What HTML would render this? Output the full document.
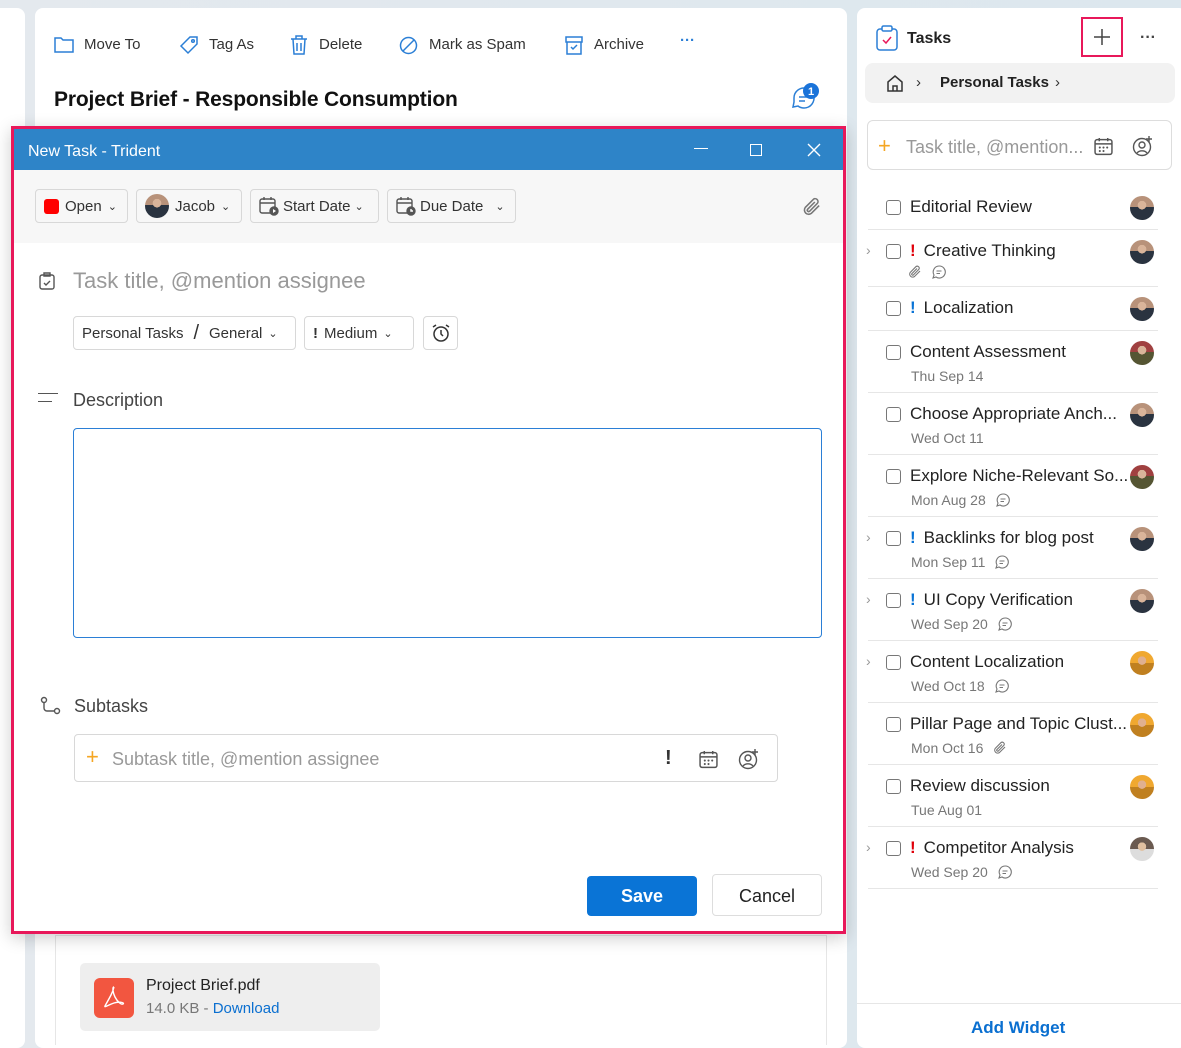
<!DOCTYPE html><html><head><style>
*{box-sizing:border-box;margin:0;padding:0}
body{width:1181px;height:1045px;overflow:hidden;background:linear-gradient(90deg,#e4e9ee,#dce7ee);font-family:"Liberation Sans",sans-serif;color:#222;position:relative}
.abs{position:absolute}
.p{background:#fff;border-radius:8px}
.tb span{position:absolute;top:36px;font-size:15px;color:#333}
.btn{position:absolute;top:189px;height:34px;border:1px solid #d8d8d8;border-radius:4px;background:#f7f7f7;font-size:15px;color:#333;display:flex;align-items:center;padding:0 8px;gap:6px}
.av{width:24px;height:24px;border-radius:50%;background:radial-gradient(circle at 50% 38%,#d9b49a 0 22%,transparent 23%),linear-gradient(#b8927a 0 45%,#2a3340 45%);display:inline-block}
.row{position:absolute;left:868px;width:290px;border-bottom:1px solid #e6e6e6}
.row .cb{position:absolute;left:18px;width:15px;height:15px;border:1.5px solid #777;border-radius:3px}
.row .t{position:absolute;left:42px;font-size:17px;color:#222;white-space:nowrap}
.row .d{position:absolute;left:43px;font-size:14px;color:#777;display:flex;align-items:center;gap:10px}
.row .av{position:absolute;left:262px}
.ex{color:#e0000a;font-weight:bold;margin-right:8px}
.exb{color:#0a74d6;font-weight:bold;margin-right:8px}
.ch{position:absolute;left:-2px;color:#999;font-size:14px}
</style></head><body>
<svg width="0" height="0" style="position:absolute"><defs>
<symbol id="cm" viewBox="0 0 14 14"><path d="M7 1a6 6 0 1 1-3 11l-3 1 1-3A6 6 0 0 1 7 1zM4.5 6h5M4.5 8.5h3.5" fill="none" stroke="#777" stroke-width="1.1"/></symbol>
<symbol id="clip" viewBox="0 0 14 14"><path d="M12 6L6.5 11.5a3 3 0 0 1-4.2-4.2L8 1.6a2 2 0 0 1 2.8 2.8L5.3 10a1 1 0 0 1-1.4-1.4L9 3.5" fill="none" stroke="#777" stroke-width="1.1"/></symbol>
<symbol id="cal" viewBox="0 0 18 18"><rect x="1" y="2.5" width="16" height="14" rx="2" fill="none" stroke="#555" stroke-width="1.4"/><path d="M1 6.5h16M5 1v3M13 1v3" stroke="#555" stroke-width="1.4"/><circle cx="5.5" cy="10" r="1" fill="#555"/><circle cx="9" cy="10" r="1" fill="#555"/><circle cx="12.5" cy="10" r="1" fill="#555"/><circle cx="5.5" cy="13.3" r="1" fill="#555"/><circle cx="9" cy="13.3" r="1" fill="#555"/></symbol>
</defs></svg>
<div class="abs p" style="left:-8px;top:8px;width:33px;height:1040px"></div>
<div class="abs p" style="left:35px;top:8px;width:812px;height:1040px"></div>
<div class="abs" style="left:55px;top:935px;width:772px;height:110px;border:1px solid #e6e6e6;border-bottom:none"></div>
<div class="tb">
<svg class="abs" style="left:54px;top:35px" width="20" height="18" fill="none" stroke="#2b7fd6" stroke-width="1.5"><path d="M1 3h6l2 2h10v12H1z"/></svg><span style="left:84px">Move To</span>
<svg class="abs" style="left:179px;top:35px" width="20" height="20" fill="none" stroke="#2b7fd6" stroke-width="1.5"><path d="M2 11l9-9h7v7l-9 9z"/><circle cx="14" cy="6" r="1.3"/></svg><span style="left:209px">Tag As</span>
<svg class="abs" style="left:290px;top:35px" width="18" height="20" fill="none" stroke="#2b7fd6" stroke-width="1.5"><path d="M1 4h16M6 4V1h6v3M3 4l1 15h10l1-15M7 8v8M11 8v8"/></svg><span style="left:319px">Delete</span>
<svg class="abs" style="left:399px;top:36px" width="19" height="19" fill="none" stroke="#2b7fd6" stroke-width="1.5"><circle cx="9.5" cy="9.5" r="8"/><path d="M4 15L15 4"/></svg><span style="left:429px">Mark as Spam</span>
<svg class="abs" style="left:565px;top:36px" width="18" height="19" fill="none" stroke="#2b7fd6" stroke-width="1.5"><path d="M1 1h16v5H1zM2 6v12h14V6M6 11l2 2 4-4"/></svg><span style="left:594px">Archive</span>
<span style="left:680px;color:#2b7fd6;font-weight:bold;top:32px">···</span>
</div>
<div class="abs" style="left:54px;top:88px;font-size:21px;font-weight:bold;color:#111;letter-spacing:-0.15px">Project Brief - Responsible Consumption</div>
<svg class="abs" style="left:790px;top:82px" width="32" height="30"><path d="M4 16a10 10 0 1 1 4 8l-5 1 1-5z" fill="none" stroke="#2b7fd6" stroke-width="1.5"/><path d="M9 15h8M9 19h6" stroke="#2b7fd6" stroke-width="1.5"/><circle cx="21" cy="9" r="8" fill="#1a73d9"/><text x="21" y="13" font-size="11" fill="#fff" text-anchor="middle" font-family="Liberation Sans" font-weight="bold">1</text></svg>
<div class="abs" style="left:80px;top:963px;width:300px;height:68px;background:#eee;border-radius:5px"></div>
<div class="abs" style="left:94px;top:978px;width:40px;height:40px;background:#f25640;border-radius:6px"></div>
<svg class="abs" style="left:100px;top:984px" width="28" height="28" fill="none" stroke="#fff" stroke-width="1.4"><path d="M14 3c-2 0-1 6 1 10s6 8 8 7-3-3-9-1-10 5-9 3 4-7 6-11 3-8 3-8"/></svg>
<div class="abs" style="left:146px;top:977px;font-size:16px">Project Brief.pdf</div>
<div class="abs" style="left:146px;top:1000px;font-size:15px;color:#777">14.0 KB - <span style="color:#0a6fd0">Download</span></div>

<!-- modal -->
<div class="abs" style="left:11px;top:126px;width:835px;height:808px;border:3px solid #e8185a;background:#fff;box-shadow:0 4px 16px rgba(0,0,0,.2)">
<div style="height:41px;background:#2e84c8;color:#fff;font-size:16px;line-height:46px;padding-left:14px;position:relative">New Task - Trident
<span style="position:absolute;left:680px;top:19px;width:14px;border-top:1.3px solid #fff"></span><span style="position:absolute;left:736px;top:15px;width:12px;height:12px;border:1.3px solid #fff"></span>
<svg style="position:absolute;left:793px;top:14px" width="14" height="14" stroke="#fff" stroke-width="1.4"><path d="M1 1l12 12M13 1L1 13"/></svg></div>
<div style="height:73px;background:#f7f7f7"></div>
</div>
<div class="btn" style="left:35px;width:93px"><span style="width:15px;height:15px;background:#f00;border-radius:3px"></span>Open <span style="font-size:11px">⌄</span></div>
<div class="btn" style="left:136px;width:106px"><span class="av"></span>Jacob <span style="font-size:11px">⌄</span></div>
<div class="btn" style="left:250px;width:129px;gap:4px"><svg width="20" height="20" fill="none" stroke="#555" stroke-width="1.4"><rect x="1" y="3" width="15" height="14" rx="2"/><path d="M1 7h15M5 1v3M12 1v3"/><circle cx="15" cy="15" r="4" fill="#555"/><path d="M14 13v4l3-2z" fill="#fff" stroke="none"/></svg>Start Date <span style="font-size:11px">⌄</span></div>
<div class="btn" style="left:387px;width:129px;gap:4px"><svg width="20" height="20" fill="none" stroke="#555" stroke-width="1.4"><rect x="1" y="3" width="15" height="14" rx="2"/><path d="M1 7h15M5 1v3M12 1v3"/><circle cx="15" cy="15" r="4" fill="#555"/><path d="M15 13v2h2" stroke="#fff"/></svg>Due Date <span style="font-size:11px;margin-left:8px">⌄</span></div>
<svg class="abs" style="left:802px;top:197px" width="20" height="20"><use href="#clip"/></svg>
<svg class="abs" style="left:39px;top:272px" width="16" height="18" fill="none" stroke="#555" stroke-width="1.4"><rect x="1" y="3" width="14" height="14" rx="2"/><path d="M5 1h6v3H5zM5 11l2 2 4-4"/></svg>
<div class="abs" style="left:73px;top:268px;font-size:22px;color:#999">Task title, @mention assignee</div>
<div class="btn" style="left:73px;top:316px;width:223px;background:#fff">Personal Tasks <span style="font-size:20px;margin:0 4px">/</span> General <span style="font-size:11px">⌄</span></div>
<div class="btn" style="left:304px;top:316px;width:110px;background:#fff"><b>!</b> Medium <span style="font-size:11px">⌄</span></div>
<div class="btn" style="left:423px;top:316px;width:35px;background:#fff;padding:0 7px"><svg width="20" height="20" fill="none" stroke="#333" stroke-width="1.5"><circle cx="10" cy="11" r="7"/><path d="M10 7v4l2 2M2 4l3-2M18 4l-3-2"/></svg></div>
<div class="abs" style="left:38px;top:393px;width:20px;border-top:1.5px solid #555"></div><div class="abs" style="left:38px;top:401px;width:14px;border-top:1.5px solid #555"></div>
<div class="abs" style="left:73px;top:390px;font-size:18px;color:#444">Description</div>
<div class="abs" style="left:73px;top:428px;width:749px;height:210px;border:1.5px solid #2b7fd6;border-radius:4px"></div>
<svg class="abs" style="left:40px;top:696px" width="22" height="20" fill="none" stroke="#555" stroke-width="1.4"><circle cx="4" cy="4" r="2.5"/><circle cx="17" cy="15" r="2.5"/><path d="M4 7v5a3 3 0 0 0 3 3h7"/></svg>
<div class="abs" style="left:74px;top:696px;font-size:18px;color:#444">Subtasks</div>
<div class="abs" style="left:74px;top:734px;width:704px;height:48px;border:1px solid #d8d8d8;border-radius:4px"></div>
<div class="abs" style="left:86px;top:744px;font-size:22px;color:#f5a623">+</div>
<div class="abs" style="left:112px;top:749px;font-size:18px;color:#999">Subtask title, @mention assignee</div>
<div class="abs" style="left:665px;top:747px;font-size:20px;font-weight:bold;color:#333">!</div>
<svg class="abs" style="left:699px;top:750px" width="19" height="19"><use href="#cal"/></svg>
<svg class="abs" style="left:738px;top:748px" width="22" height="22" fill="none" stroke="#555" stroke-width="1.4"><circle cx="10" cy="12" r="8.5"/><circle cx="10" cy="10" r="3"/><path d="M5 18a6 5 0 0 1 10 0M17 1v6M14 4h6"/></svg>
<div class="abs" style="left:587px;top:876px;width:110px;height:40px;background:#0a74d6;border-radius:4px;color:#fff;font-size:18px;font-weight:bold;text-align:center;line-height:40px">Save</div>
<div class="abs" style="left:712px;top:874px;width:110px;height:42px;border:1px solid #ddd;border-radius:4px;font-size:18px;text-align:center;line-height:42px">Cancel</div>

<!-- right -->
<div class="abs p" style="left:857px;top:8px;width:330px;height:1040px"></div>
<svg class="abs" style="left:876px;top:25px" width="22" height="26" fill="none"><rect x="1" y="4" width="20" height="21" rx="3" stroke="#2b7fd6" stroke-width="1.5"/><rect x="6" y="1" width="10" height="5" rx="1.5" stroke="#2b7fd6" stroke-width="1.5" fill="#fff"/><path d="M7 15l3 3 5-6" stroke="#e8185a" stroke-width="1.5"/></svg>
<div class="abs" style="left:907px;top:30px;font-size:16px;font-weight:bold;color:#222">Tasks</div>
<div class="abs" style="left:1081px;top:17px;width:42px;height:40px;border:2.5px solid #e8185a"></div>
<svg class="abs" style="left:1094px;top:29px" width="16" height="16" stroke="#444" stroke-width="1.5"><path d="M8 0v16M0 8h16"/></svg>
<div class="abs" style="left:1140px;top:29px;font-size:16px;font-weight:bold;color:#444">···</div>
<div class="abs" style="left:865px;top:63px;width:310px;height:40px;background:#f2f2f2;border-radius:8px"></div>
<svg class="abs" style="left:886px;top:74px" width="18" height="18" fill="none" stroke="#333" stroke-width="1.5"><path d="M2 8l7-6 7 6v9H2zM7 17v-5h4v5"/></svg>
<div class="abs" style="left:916px;top:74px;font-size:15px;color:#333">›</div>
<div class="abs" style="left:940px;top:74px;font-size:15px;font-weight:bold;color:#222">Personal Tasks</div>
<div class="abs" style="left:1055px;top:74px;font-size:15px;color:#333">›</div>
<div class="abs" style="left:867px;top:120px;width:305px;height:50px;border:1px solid #ddd;border-radius:6px"></div>
<div class="abs" style="left:878px;top:133px;font-size:22px;color:#f5a623">+</div>
<div class="abs" style="left:906px;top:137px;font-size:18px;color:#999">Task title, @mention...</div>
<svg class="abs" style="left:1094px;top:137px" width="19" height="19"><use href="#cal"/></svg>
<svg class="abs" style="left:1132px;top:135px" width="22" height="22" fill="none" stroke="#555" stroke-width="1.4"><circle cx="10" cy="12" r="8.5"/><circle cx="10" cy="10" r="3"/><path d="M5 18a6 5 0 0 1 10 0M17 1v6M14 4h6"/></svg>

<div class="row" style="top:185px;height:45px"><span class="cb" style="top:15px"></span><span class="t" style="top:12px">Editorial Review</span><span class="av" style="top:11px"></span></div>
<div class="row" style="top:230px;height:57px"><span class="ch" style="top:12px">›</span><span class="cb" style="top:14px"></span><span class="t" style="top:11px"><span class="ex">!</span>Creative Thinking</span><span class="d" style="top:35px;left:40px"><svg width="14" height="14"><use href="#clip"/></svg><svg width="14" height="14"><use href="#cm"/></svg></span><span class="av" style="top:10px"></span></div>
<div class="row" style="top:287px;height:44px"><span class="cb" style="top:14px"></span><span class="t" style="top:11px"><span class="exb">!</span>Localization</span><span class="av" style="top:10px"></span></div>
<div class="row" style="top:331px;height:62px"><span class="cb" style="top:14px"></span><span class="t" style="top:11px">Content Assessment</span><span class="d" style="top:37px">Thu Sep 14</span><span class="av" style="top:10px;background:radial-gradient(circle at 50% 38%,#d9b49a 0 22%,transparent 23%),linear-gradient(#a04040 0 45%,#553 45%)"></span></div>
<div class="row" style="top:393px;height:62px"><span class="cb" style="top:14px"></span><span class="t" style="top:11px">Choose Appropriate Anch...</span><span class="d" style="top:37px">Wed Oct 11</span><span class="av" style="top:10px"></span></div>
<div class="row" style="top:455px;height:62px"><span class="cb" style="top:14px"></span><span class="t" style="top:11px">Explore Niche-Relevant So...</span><span class="d" style="top:37px">Mon Aug 28 <svg width="14" height="14"><use href="#cm"/></svg></span><span class="av" style="top:10px;background:radial-gradient(circle at 50% 38%,#d9b49a 0 22%,transparent 23%),linear-gradient(#a04040 0 45%,#553 45%)"></span></div>
<div class="row" style="top:517px;height:62px"><span class="ch" style="top:12px">›</span><span class="cb" style="top:14px"></span><span class="t" style="top:11px"><span class="exb">!</span>Backlinks for blog post</span><span class="d" style="top:37px">Mon Sep 11 <svg width="14" height="14"><use href="#cm"/></svg></span><span class="av" style="top:10px"></span></div>
<div class="row" style="top:579px;height:62px"><span class="ch" style="top:12px">›</span><span class="cb" style="top:14px"></span><span class="t" style="top:11px"><span class="exb">!</span>UI Copy Verification</span><span class="d" style="top:37px">Wed Sep 20 <svg width="14" height="14"><use href="#cm"/></svg></span><span class="av" style="top:10px"></span></div>
<div class="row" style="top:641px;height:62px"><span class="ch" style="top:12px">›</span><span class="cb" style="top:14px"></span><span class="t" style="top:11px">Content Localization</span><span class="d" style="top:37px">Wed Oct 18 <svg width="14" height="14"><use href="#cm"/></svg></span><span class="av" style="top:10px;background:radial-gradient(circle at 50% 40%,#e0b090 0 22%,transparent 23%),linear-gradient(#f0a830 0 50%,#c08020 50%)"></span></div>
<div class="row" style="top:703px;height:62px"><span class="cb" style="top:14px"></span><span class="t" style="top:11px">Pillar Page and Topic Clust...</span><span class="d" style="top:37px">Mon Oct 16 <svg width="14" height="14"><use href="#clip"/></svg></span><span class="av" style="top:10px;background:radial-gradient(circle at 50% 40%,#e0b090 0 22%,transparent 23%),linear-gradient(#f0a830 0 50%,#c08020 50%)"></span></div>
<div class="row" style="top:765px;height:62px"><span class="cb" style="top:14px"></span><span class="t" style="top:11px">Review discussion</span><span class="d" style="top:37px">Tue Aug 01</span><span class="av" style="top:10px;background:radial-gradient(circle at 50% 40%,#e0b090 0 22%,transparent 23%),linear-gradient(#f0a830 0 50%,#c08020 50%)"></span></div>
<div class="row" style="top:827px;height:62px"><span class="ch" style="top:12px">›</span><span class="cb" style="top:14px"></span><span class="t" style="top:11px"><span class="ex">!</span>Competitor Analysis</span><span class="d" style="top:37px">Wed Sep 20 <svg width="14" height="14"><use href="#cm"/></svg></span><span class="av" style="top:10px;background:radial-gradient(circle at 50% 40%,#e0c0a0 0 22%,transparent 23%),linear-gradient(#6a5a50 0 50%,#ddd 50%)"></span></div>
<div class="abs" style="left:857px;top:1003px;width:324px;border-top:1px solid #e6e6e6"></div>
<div class="abs" style="left:971px;top:1018px;font-size:17px;font-weight:bold;color:#0a6fd0">Add Widget</div>
</body></html>
